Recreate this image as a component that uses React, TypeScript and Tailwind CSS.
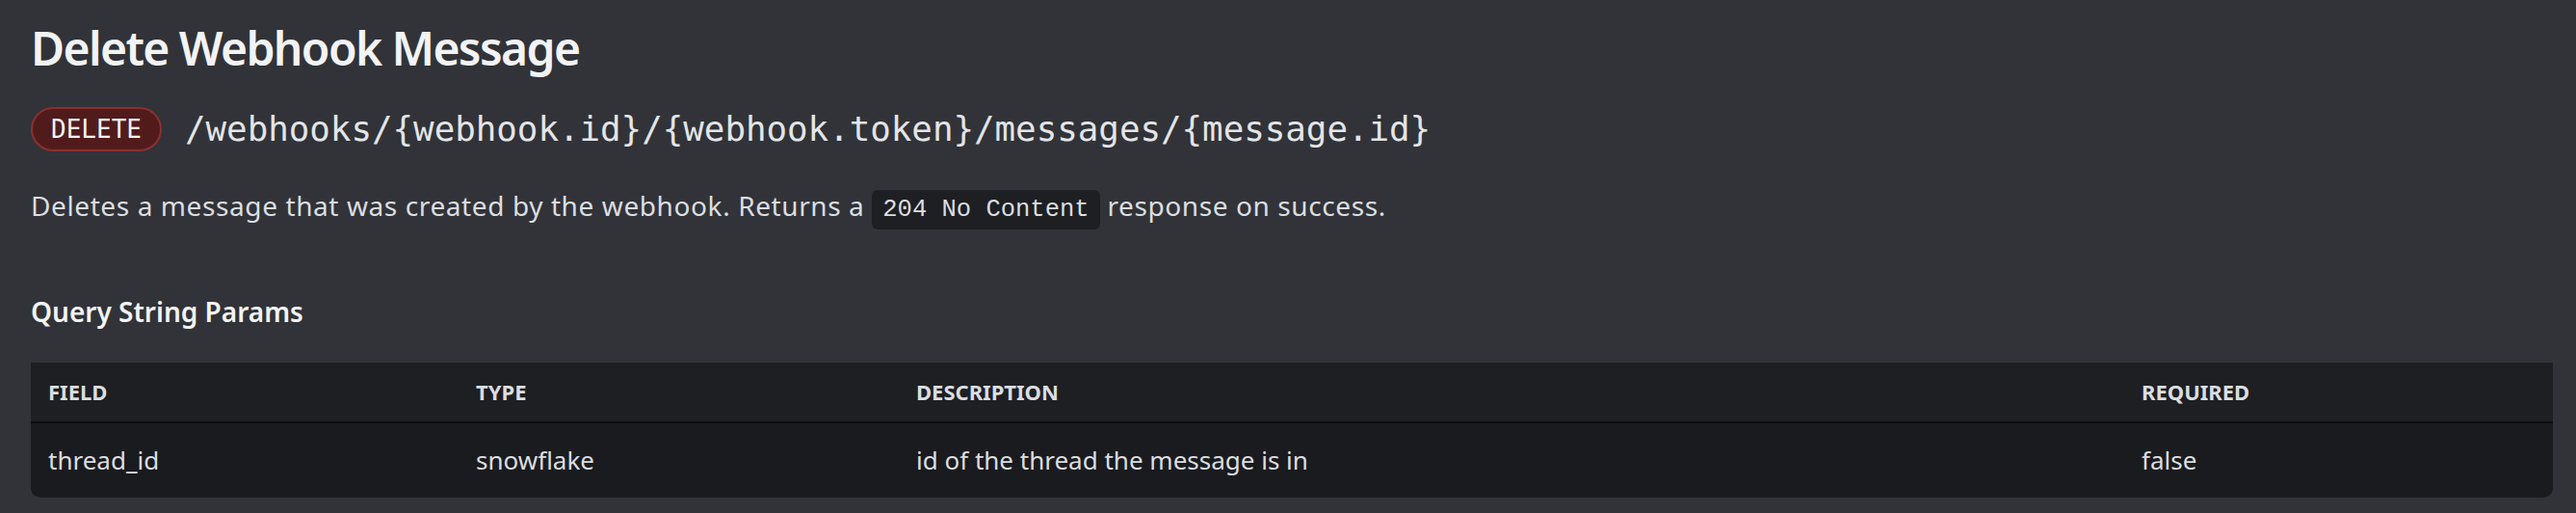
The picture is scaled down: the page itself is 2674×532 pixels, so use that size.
import React from 'react';

const params = [
  { field: 'thread_id', type: 'snowflake', description: 'id of the thread the message is in', required: 'false' },
];

export default function App() {
  return (
    <div className="min-h-screen bg-[#313338] pl-[32px] pr-[24px] pt-[21px] font-['Noto_Sans',sans-serif] text-[#dbdee1]">
      {/* Heading */}
      <h1 className="text-[48px] leading-[58px] font-semibold tracking-[-1.6px] text-[#f2f3f5]">Delete Webhook Message</h1>

      {/* Endpoint */}
      <div className="mt-[32px] flex items-center gap-[24px]">
        <span className="h-[46px] w-[136px] rounded-full border-2 border-[#8c2f2f] bg-[#521b1b] flex items-center justify-center font-['DejaVu_Sans_Mono',monospace] text-[26px] text-[#f2f3f5]">
          DELETE
        </span>
        <span className="font-['DejaVu_Sans_Mono',monospace] text-[35.8px] leading-[46px] text-[#e3e5e8]">
          /webhooks/{'{'}webhook.id{'}'}/{'{'}webhook.token{'}'}/messages/{'{'}message.id{'}'}
        </span>
      </div>

      {/* Description */}
      <p className="mt-[38px] text-[28px] leading-[36px] tracking-[0.6px]">
        Deletes a message that was created by the webhook. Returns a{' '}
        <code className="rounded-[6px] bg-[#1e1f22] px-[11px] py-[6px] font-['Liberation_Mono',monospace] text-[25.5px] tracking-normal">
          204 No Content
        </code>{' '}
        response on success.
      </p>

      {/* Params */}
      <h3 className="mt-[69px] text-[28px] leading-[36px] font-semibold text-[#f2f3f5]">Query String Params</h3>

      <div className="mt-[35px] overflow-hidden rounded-b-[10px] bg-[#1a1b1e]">
        <div className="grid h-[63px] grid-cols-[444px_457px_1fr_409px] items-center border-b-2 border-[#0c0c0e] bg-[#1e1f22] px-[18px] text-[22px] font-bold uppercase text-[#dbdee1]">
          <div>Field</div>
          <div>Type</div>
          <div>Description</div>
          <div>Required</div>
        </div>
        {params.map((p) => (
          <div key={p.field} className="grid h-[77px] grid-cols-[444px_457px_1fr_409px] items-center px-[18px] text-[26px] text-[#dbdee1]">
            <div>{p.field}</div>
            <div>{p.type}</div>
            <div>{p.description}</div>
            <div>{p.required}</div>
          </div>
        ))}
      </div>
    </div>
  );
}
